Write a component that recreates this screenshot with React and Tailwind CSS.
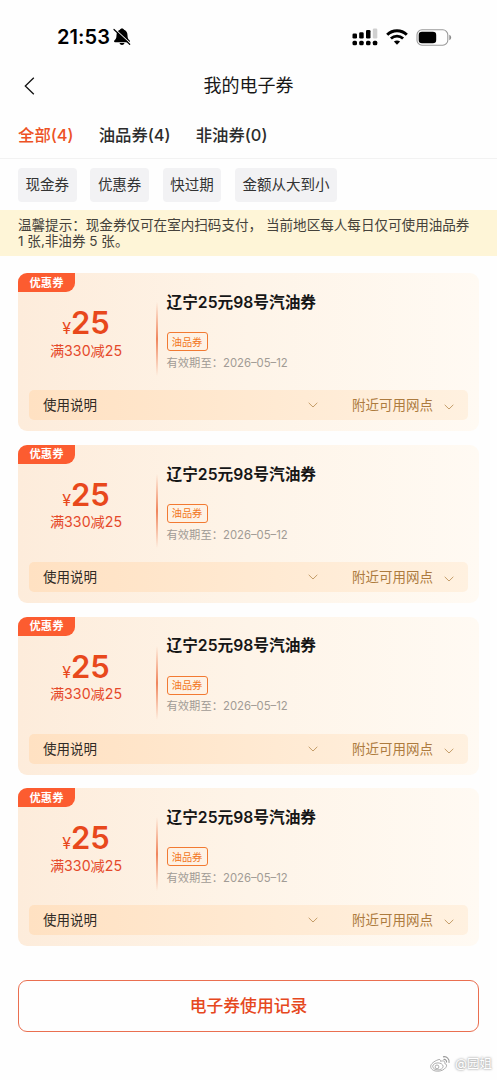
import React, { useState } from 'react';

const tabs = [
  { id: 'all', label: '全部(4)' },
  { id: 'oil', label: '油品券(4)' },
  { id: 'other', label: '非油券(0)' },
];

const filters = ['现金券', '优惠券', '快过期', '金额从大到小'];

const coupons = [1, 2, 3, 4].map((id) => ({
  id,
  type: '优惠券',
  amount: 25,
  rule: '满330减25',
  title: '辽宁25元98号汽油券',
  tag: '油品券',
  expires: '2026–05–12',
}));

const Chevron = () => (
  <svg width="10" height="6" viewBox="0 0 10 6" fill="none" stroke="#bd945c" strokeWidth="0.9">
    <path d="M0.7 0.8 L5 5 L9.3 0.8" />
  </svg>
);

const StatusBar = () => (
  <div className="flex h-[62px] items-start justify-between pl-[57px] pr-[45px] pt-[27px]">
    <div className="flex items-center">
      <span className="text-[20px] font-semibold leading-5 tracking-[0.1px] text-black">21:53</span>
      <svg className="ml-[3px]" width="18" height="18" viewBox="0 0 18 18">
        <path d="M9 0.5c-1.2 0-1.8.6-2 1.3C4.9 2.6 3.5 4.6 3.5 7.2c0 3-.8 3.8-2 5-.8.8-.5 2 .5 2h14c1 0 1.3-1.2.5-2-1.2-1.2-2-2-2-5 0-2.600-1.400-4.600-3.500-5.400C10.800 1.100 10.200.5 9 .5z" fill="#000" />
        <path d="M6.5 15.1h5c-.3 1.3-1.3 2-2.5 2s-2.200-.7-2.500-2z" fill="#000" />
        <path d="M1.7 0.8 L17.6 15.6" stroke="#fff" strokeWidth="1.1" />
        <path d="M1 1.5 L16.7 16.3" stroke="#000" strokeWidth="1.2" strokeLinecap="round" />
      </svg>
    </div>
    <div className="flex items-center pt-[1px]">
      <svg width="26" height="18" viewBox="0 0 26 18" fill="#000">
        <rect x="0.5" y="5.5" width="4.5" height="5" rx="1.3" />
        <rect x="7.2" y="4.2" width="4.5" height="6.3" rx="1.3" />
        <rect x="14" y="2" width="4.5" height="8.5" rx="1.3" />
        <rect x="20.8" y="0.5" width="4.5" height="10" rx="1.3" fill="#d0d0d0" />
        <rect x="0.5" y="12.7" width="4.5" height="4.5" rx="1.5" />
        <rect x="7.2" y="12.7" width="4.5" height="4.5" rx="1.5" />
        <rect x="14" y="12.7" width="4.5" height="4.5" rx="1.5" />
        <rect x="20.8" y="12.7" width="4.5" height="4.5" rx="1.5" />
      </svg>
      <svg className="ml-2" width="22" height="17" viewBox="0 0 22 17" fill="none" stroke="#000">
        <path d="M1.2 5.7 C6.7 0.3 15.3 0.3 20.8 5.7" strokeWidth="3" />
        <path d="M4.9 9.5 C8.4 6.2 13.6 6.2 17.1 9.5" strokeWidth="2.8" />
        <path d="M11 15.7 L7.9 12.6 C9.6 11 12.4 11 14.1 12.6 Z" fill="#000" stroke="none" />
      </svg>
      <svg className="ml-2" width="36" height="17" viewBox="0 0 36 17">
        <rect x="1" y="0.8" width="30.8" height="15.4" rx="5" fill="none" stroke="#9a9a9a" strokeWidth="1.1" />
        <rect x="2.7" y="2.7" width="17.5" height="11.6" rx="3.3" fill="#000" />
        <path d="M33.3 5.8 C35.8 6.8 35.8 10.2 33.3 11.2 Z" fill="#8a8a8a" />
      </svg>
    </div>
  </div>
);

const CouponCard = ({ coupon }) => (
  <div className="flex h-[158px] flex-col rounded-[9px] bg-linear-to-r from-[#fdecdb] via-[#fef4e8] to-[#fffaf3]">
    <div className="flex h-[117px]">
      <div className="w-[138px]">
        <div className="flex h-[19px] w-[57px] items-center justify-center rounded-tl-[9px] rounded-br-[9px] bg-[#fc5c30] pt-px text-[11.3px] font-bold leading-none text-white">
          {coupon.type}
        </div>
        <div className="flex h-[46px] items-baseline justify-center pr-[2px] pt-[11px] leading-[40px] text-[#e8481c]">
          <span className="text-[16px]">¥</span>
          <span className="text-[31px] font-semibold">{coupon.amount}</span>
        </div>
        <div className="pr-[2px] pt-[0.4px] text-center text-[14.2px] leading-6 text-[#e5492a]">{coupon.rule}</div>
      </div>
      <div className="mt-[29px] h-[74px] w-[1.5px] bg-linear-to-b from-[#f0855c]/0 via-[#f0855c] to-[#f0855c]/0" />
      <div className="pl-[9px] pt-[18.6px]">
        <h2 className="text-[15.7px] font-semibold leading-[22px] text-[#161616]">{coupon.title}</h2>
        <div className="mt-[18.4px] flex h-[19px] w-[41px] items-center justify-center rounded-[3px] border-[1.5px] border-[#f27a32] text-[10.2px] leading-none text-[#f27622]">
          {coupon.tag}
        </div>
        <p className="mt-[3.6px] text-[11.3px] leading-4 text-[#a19b95]">有效期至：{coupon.expires}</p>
      </div>
    </div>
    <div className="mx-[11px] flex h-[30px] items-center rounded-[5px] bg-linear-to-r from-[#ffe1c2] to-[#fff1e0] pl-[14px] pr-[14px] text-[13.5px]">
      <button className="flex flex-1 items-center justify-between leading-5 text-[#302a25]">
        使用说明
        <Chevron />
      </button>
      <button className="ml-[34px] flex items-center leading-5 text-[#ad7b3e]">
        附近可用网点
        <span className="ml-[11px] mt-1">
          <Chevron />
        </span>
      </button>
    </div>
  </div>
);

const Watermark = () => (
  <div className="mt-[22px] flex h-5 items-center justify-end pr-[5px]">
    <svg width="22" height="18" viewBox="0 0 22 18" fill="#fff" stroke="#999" strokeWidth="0.8">
      <path d="M8 4.8c1.5-.7 2.9-.2 2.6 1.6 2.4-1 4.8-.5 4.1 2 2.2.7 2.3 2.5 1.1 4.1-1.7 2.3-4.8 3.7-8.1 3.7-3.9 0-7-1.8-7-4.9C.7 8.9 4.2 6.2 8 4.8z" />
      <ellipse cx="7.9" cy="11.4" rx="5.2" ry="3.5" />
      <circle cx="7" cy="11.9" r="1.9" />
      <path d="M13 1.9c3.5-1 7 2 6 6M13.5 4.5c1.9-.5 3.5 1 3 3" fill="none" strokeWidth="1.1" />
    </svg>
    <span className="ml-[3px] text-[12.5px] leading-5 text-white [text-shadow:0_0_2px_#999,0_0_3px_#bbb]">@园姐</span>
  </div>
);

const CouponPage = () => {
  const [activeTab, setActiveTab] = useState('all');

  return (
    <div className="h-[1080px] w-full overflow-hidden bg-[#fefefe] font-[Inter,'Noto_Sans_CJK_SC',sans-serif]">
      <StatusBar />

      <header className="grid h-12 grid-cols-3 items-center px-6">
        <button aria-label="返回">
          <svg width="11" height="18" viewBox="0 0 11 18" fill="none" stroke="#111" strokeWidth="1.3">
            <path d="M9.8 0.8 L1.3 9 L9.8 17.2" />
          </svg>
        </button>
        <h1 className="whitespace-nowrap text-center text-[18px] leading-6 text-[#171717]">我的电子券</h1>
      </header>

      <nav className="flex h-[49px] items-center gap-[25px] border-b border-[#f2f2f2] pl-[18px] pt-[2px]">
        {tabs.map((tab) => (
          <button
            key={tab.id}
            onClick={() => setActiveTab(tab.id)}
            className={`text-[16.4px] font-medium leading-6 ${
              activeTab === tab.id ? 'text-[#ed5225]' : 'text-[#2c2c2c]'
            }`}
          >
            {tab.label}
          </button>
        ))}
      </nav>

      <div className="flex h-[51px] items-start gap-[13.6px] pl-[18px] pt-[9px]">
        {filters.map((filter) => (
          <button key={filter} className="h-[34px] rounded-[4px] bg-[#f2f2f4] px-[7.6px] text-[14.5px] leading-[34px] text-[#333]">
            {filter}
          </button>
        ))}
      </div>

      <div className="h-[46px] whitespace-nowrap bg-[#fef5d7] pl-[18px] pt-[7px] text-[13.57px] leading-4 text-[#45423b]">
        温馨提示：现金券仅可在室内扫码支付， 当前地区每人每日仅可使用油品券
        <br />1 张,非油券 5 张。
      </div>

      <main className="flex flex-col gap-[13.67px] px-[18px] pt-[17.4px]">
        {coupons.map((coupon) => (
          <CouponCard key={coupon.id} coupon={coupon} />
        ))}
      </main>

      <div className="px-[18px] pt-[34px]">
        <button className="h-[52px] w-full rounded-[9px] border-[1.5px] border-[#ea6f50] text-[16.8px] font-medium leading-6 text-[#e6481e]">
          电子券使用记录
        </button>
      </div>

      <Watermark />
    </div>
  );
};

export default function App() {
  return <CouponPage />;
}
